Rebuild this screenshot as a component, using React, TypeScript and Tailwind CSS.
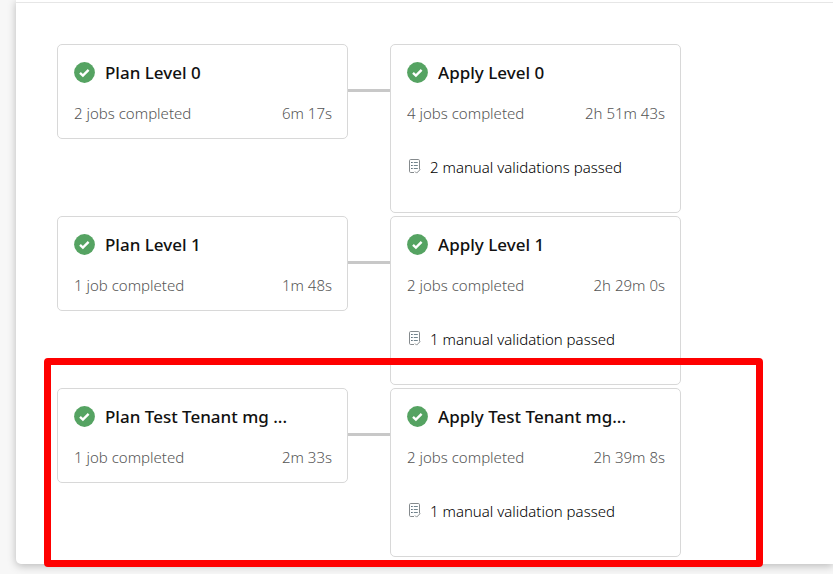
import React from 'react';

type Stage = {
  title: string;
  jobs: string;
  duration: string;
  validation?: string;
};

const rows: { plan: Stage; apply: Stage; highlighted?: boolean }[] = [
  {
    plan: { title: 'Plan Level 0', jobs: '2 jobs completed', duration: '6m 17s' },
    apply: {
      title: 'Apply Level 0',
      jobs: '4 jobs completed',
      duration: '2h 51m 43s',
      validation: '2 manual validations passed',
    },
  },
  {
    plan: { title: 'Plan Level 1', jobs: '1 job completed', duration: '1m 48s' },
    apply: {
      title: 'Apply Level 1',
      jobs: '2 jobs completed',
      duration: '2h 29m 0s',
      validation: '1 manual validation passed',
    },
  },
  {
    plan: { title: 'Plan Test Tenant mg ...', jobs: '1 job completed', duration: '2m 33s' },
    apply: {
      title: 'Apply Test Tenant mg...',
      jobs: '2 jobs completed',
      duration: '2h 39m 8s',
      validation: '1 manual validation passed',
    },
    highlighted: true,
  },
];

function SuccessIcon() {
  return (
    <svg className="mt-[3px] size-[21px] shrink-0" viewBox="0 0 21 21" fill="none" aria-hidden="true">
      <circle cx="10.5" cy="10.5" r="10.4" fill="#55a362" />
      <path d="M6 10.9l2.9 2.7 5.7-5.8" stroke="#fff" strokeWidth="2.4" />
    </svg>
  );
}

function ChecklistIcon() {
  return (
    <svg className="h-4 w-[14px] shrink-0" viewBox="0 0 14 16" fill="none" aria-hidden="true">
      <path
        d="M7 13.5H3.7a1.2 1.2 0 0 1-1.2-1.2V1.7A1.2 1.2 0 0 1 3.7.5h7.6a1.2 1.2 0 0 1 1.2 1.2v8.8M8 12.5l1.6 1.6 3.6-3.6"
        stroke="#858a8d"
      />
      <path d="M4.2 3.5h1.4M4.2 6.5h1.4M4.2 9.5h1.4" stroke="#3d5261" />
      <path d="M6.8 3.5h4M6.8 6.5h4M6.8 9.5h4" stroke="#74868f" />
    </svg>
  );
}

function StageCard({ stage }: { stage: Stage }) {
  return (
    <article className="w-[291px] shrink-0 rounded-[5px] border border-[#d8d8d8] bg-white pt-[14px] pr-[15px] pb-[13px] pl-4">
      <div className="flex h-7 items-start gap-[10px]">
        <SuccessIcon />
        <h3 className="truncate text-[17px] leading-7 font-medium text-[#111]">{stage.title}</h3>
      </div>
      <div className="mt-[14px] flex justify-between text-[15px] leading-6 font-light text-[#555]">
        <span>{stage.jobs}</span>
        <span>{stage.duration}</span>
      </div>
      {stage.validation && (
        <div className="mt-[30px] mb-5 flex h-6 items-center gap-[9px] text-[15px] leading-6 font-light text-black">
          <ChecklistIcon />
          <span>{stage.validation}</span>
        </div>
      )}
    </article>
  );
}

export default function App() {
  return (
    <div className="min-h-screen overflow-hidden bg-[#f7f7f7] pb-[10px] pl-4 font-['Noto_Sans','Open_Sans',sans-serif]">
      <main className="rounded-bl-[5px] bg-white pb-[7px] shadow-[0_2px_8px_rgba(0,0,0,0.25)]">
        <div className="h-[3px] border-b border-[#e6e6e6]" />
        <div className="flex flex-col gap-[3px] pt-[41px] pl-[41px]">
          {rows.map((row) => (
            <section key={row.plan.title} className="relative flex w-fit items-start">
              <StageCard stage={row.plan} />
              <div className="mt-[45px] h-[3px] w-[42px] shrink-0 bg-[#c8c8c8]" />
              <StageCard stage={row.apply} />
              {/* Callout frame around the last level */}
              {row.highlighted && (
                <div className="pointer-events-none absolute -top-[30px] -right-[82px] -bottom-[10px] -left-[13px] rounded-[4px] border-[7px] border-[#fe0000]" />
              )}
            </section>
          ))}
        </div>
      </main>
    </div>
  );
}
